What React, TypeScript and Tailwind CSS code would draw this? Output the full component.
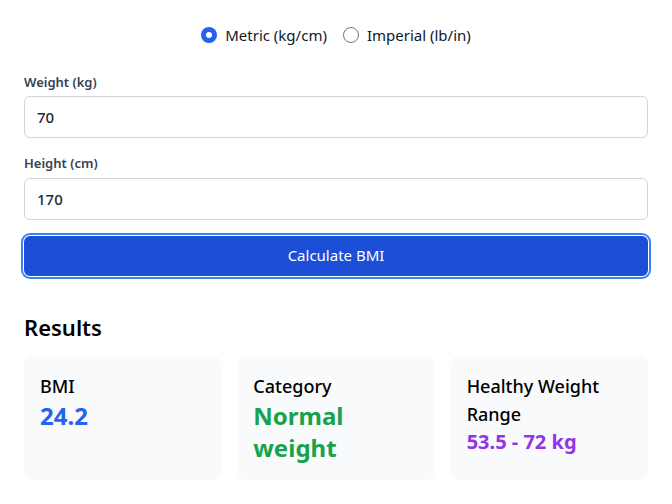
import { useState } from 'react'

function Radio({ checked, onClick, label }: { checked: boolean; onClick: () => void; label: string }) {
  return (
    <label className="flex cursor-pointer items-center gap-2" onClick={onClick}>
      {checked ? (
        <span className="grid h-4 w-4 place-items-center rounded-full bg-[#2563eb]">
          <span className="h-[6px] w-[6px] rounded-full bg-white" />
        </span>
      ) : (
        <span className="h-4 w-4 rounded-full border border-[#767676] bg-white" />
      )}
      {label}
    </label>
  )
}

export default function App() {
  const [unit, setUnit] = useState<'metric' | 'imperial'>('metric')

  return (
    <div className="min-h-[504px] bg-white px-6 pt-[24px] font-['Segoe_UI','Noto_Sans',sans-serif] text-black">
      {/* Unit toggle */}
      <div className="flex justify-center gap-4 text-[15px] text-gray-900">
        <Radio checked={unit === 'metric'} onClick={() => setUnit('metric')} label="Metric (kg/cm)" />
        <Radio checked={unit === 'imperial'} onClick={() => setUnit('imperial')} label="Imperial (lb/in)" />
      </div>

      <div className="mt-[26px] space-y-4">
        <div>
          <label className="mb-1 block text-[13px] font-semibold text-[#374151]">Weight (kg)</label>
          <input
            defaultValue="70"
            className="h-[42px] w-full rounded-md border border-[#d1d5db] px-3 text-[15px] font-medium text-[#1f2937]"
          />
        </div>
        <div>
          <label className="mb-1 block text-[13px] font-semibold text-[#374151]">Height (cm)</label>
          <input
            defaultValue="170"
            className="h-[42px] w-full rounded-md border border-[#d1d5db] px-3 text-[15px] font-medium text-[#1f2937]"
          />
        </div>
        <button className="h-[40px] w-full rounded-md bg-[#1d4ed8] text-[15px] text-white ring-2 ring-[#3b82f6] ring-offset-1">
          Calculate BMI
        </button>
      </div>

      <h2 className="mt-[35px] text-[22px] font-semibold">Results</h2>

      <div className="mt-3 grid grid-cols-3 gap-4">
        <div className="h-[124px] rounded-lg bg-[#f9fafb] p-4">
          <div className="text-lg font-medium leading-7">BMI</div>
          <div className="text-2xl font-bold leading-8 text-[#2563eb]">24.2</div>
        </div>
        <div className="h-[124px] rounded-lg bg-[#f9fafb] p-4">
          <div className="text-lg font-medium leading-7">Category</div>
          <div className="text-2xl font-bold leading-8 text-[#16a34a]">Normal weight</div>
        </div>
        <div className="h-[124px] rounded-lg bg-[#f9fafb] p-4">
          <div className="text-lg font-medium leading-7">Healthy Weight Range</div>
          <div className="text-xl font-bold leading-7 text-[#9333ea]">53.5 - 72 kg</div>
        </div>
      </div>
    </div>
  )
}
